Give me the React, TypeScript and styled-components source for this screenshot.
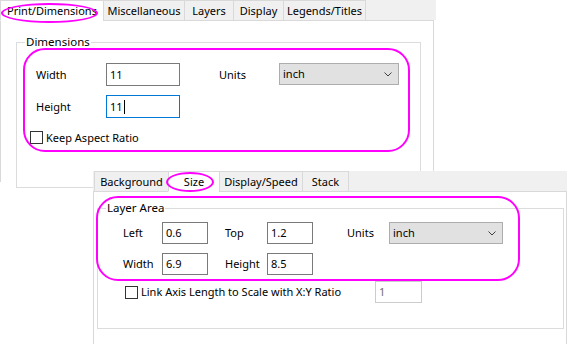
import React from 'react';
import styled, { createGlobalStyle } from 'styled-components';

const Global = createGlobalStyle`
  html, body { margin: 0; padding: 0; background: #ffffff; }
  body {
    font-family: "Noto Sans", "Segoe UI", Arial, sans-serif;
    font-size: 11px;
    color: #000000;
  }
`;

const Canvas = styled.div`
  position: relative;
  width: 567px;
  height: 344px;
  overflow: hidden;
  background: #ffffff;
`;

const Window = styled.div<{ $x: number; $y: number; $w: number; $h: number }>`
  position: absolute;
  left: ${p => p.$x}px;
  top: ${p => p.$y}px;
  width: ${p => p.$w}px;
  height: ${p => p.$h}px;
  display: flex;
  flex-direction: column;
`;

const TabStrip = styled.div<{ $pad: number }>`
  position: relative;
  z-index: 2;
  display: flex;
  flex-shrink: 0;
  height: 20px;
  padding-left: ${p => p.$pad}px;
  background: #f0f0f0;
`;

const Tab = styled.div<{ $w: number; $active?: boolean }>`
  box-sizing: border-box;
  width: ${p => p.$w}px;
  height: 21px;
  margin-left: -1px;
  display: flex;
  align-items: center;
  justify-content: center;
  white-space: nowrap;
  line-height: 16px;
  background: ${p => (p.$active ? '#ffffff' : '#f0f0f0')};
  border: 1px solid #d9d9d9;
  border-bottom-color: ${p => (p.$active ? '#ffffff' : '#d9d9d9')};
  &:first-child { margin-left: 0; }
`;

const Panel = styled.div<{ $w: number; $h?: number }>`
  box-sizing: border-box;
  width: ${p => p.$w}px;
  ${p => (p.$h ? `height: ${p.$h}px;` : 'flex: 1;')}
  background: #ffffff;
  border: 1px solid #d9d9d9;
  border-bottom: none;
  display: flex;
  flex-direction: column;
`;

const GroupBox = styled.div<{ $ml: number; $mt: number; $w: number; $h: number }>`
  position: relative;
  box-sizing: border-box;
  flex-shrink: 0;
  width: ${p => p.$w}px;
  height: ${p => p.$h}px;
  margin: ${p => p.$mt}px 0 0 ${p => p.$ml}px;
  border: 1px solid #dcdcdc;
  background: #ffffff;
  display: flex;
  flex-direction: column;
`;

const Legend = styled.span`
  position: absolute;
  top: -8px;
  left: 8px;
  padding: 0 1px;
  background: #ffffff;
  font-size: 11.5px;
  line-height: 14px;
  white-space: nowrap;
`;

const FieldGrid = styled.div<{ $cols: string; $row: number; $pt: number; $pl: number }>`
  display: grid;
  grid-template-columns: ${p => p.$cols};
  grid-auto-rows: ${p => p.$row}px;
  row-gap: 9px;
  align-items: center;
  padding: ${p => p.$pt}px 0 0 ${p => p.$pl}px;
`;

const FieldLabel = styled.span<{ $indent?: number }>`
  padding-left: ${p => p.$indent ?? 0}px;
  line-height: 16px;
  white-space: nowrap;
`;

const TextBox = styled.div<{ $focused?: boolean; $disabled?: boolean; $w?: number }>`
  box-sizing: border-box;
  width: ${p => (p.$w ? `${p.$w}px` : '100%')};
  height: 100%;
  display: flex;
  align-items: center;
  padding-left: 3px;
  background: #ffffff;
  line-height: 16px;
  border: 1px solid ${p => (p.$focused ? '#0078d7' : p.$disabled ? '#cccccc' : '#7a7a7a')};
  color: ${p => (p.$disabled ? '#6d6d6d' : '#000000')};
`;

const Caret = styled.span`
  display: inline-block;
  width: 0;
  height: 14px;
  margin-left: 1px;
  border-left: 1px solid #000000;
`;

const Select = styled.div`
  box-sizing: border-box;
  height: 22px;
  align-self: start;
  display: flex;
  align-items: center;
  justify-content: space-between;
  padding: 0 6px 0 3px;
  background: #e1e1e1;
  border: 1px solid #adadad;
  line-height: 16px;
`;

const Chevron = () => (
  <svg width="8" height="5" viewBox="0 0 8 5">
    <polyline points="0.5,0.5 4,4 7.5,0.5" fill="none" stroke="#404040" strokeWidth="1" />
  </svg>
);

const CheckRow = styled.div<{ $ml: number; $mt: number; $h: number }>`
  display: flex;
  align-items: center;
  height: ${p => p.$h}px;
  margin: ${p => p.$mt}px 0 0 ${p => p.$ml}px;
`;

const CheckLabel = styled.div<{ $w?: number }>`
  display: flex;
  align-items: center;
  gap: 3px;
  ${p => (p.$w ? `width: ${p.$w}px;` : '')}
  white-space: nowrap;
  line-height: 16px;
`;

const Box = styled.span`
  box-sizing: border-box;
  width: 13px;
  height: 13px;
  border: 1px solid #333333;
  background: #ffffff;
  flex-shrink: 0;
`;

const Mark = styled.div<{ $x: number; $y: number; $w: number; $h: number; $r: string }>`
  position: absolute;
  z-index: 10;
  box-sizing: border-box;
  left: ${p => p.$x}px;
  top: ${p => p.$y}px;
  width: ${p => p.$w}px;
  height: ${p => p.$h}px;
  border: 2px solid #ff00ff;
  border-radius: ${p => p.$r};
  pointer-events: none;
`;

export default function App() {
  return (
    <Canvas>
      <Global />

      <Window $x={0} $y={0} $w={436} $h={190}>
        <TabStrip $pad={0}>
          <Tab $w={104} $active>Print/Dimensions</Tab>
          <Tab $w={82}>Miscellaneous</Tab>
          <Tab $w={50}>Layers</Tab>
          <Tab $w={51}>Display</Tab>
          <Tab $w={83}>Legends/Titles</Tab>
        </TabStrip>
        <Panel $w={434} $h={162}>
          <GroupBox $ml={15} $mt={21} $w={405} $h={146}>
            <Legend>Dimensions</Legend>
            <FieldGrid $cols="70px 74px 99px 120px" $row={23} $pt={20} $pl={19}>
              <FieldLabel>Width</FieldLabel>
              <TextBox>11</TextBox>
              <FieldLabel $indent={39}>Units</FieldLabel>
              <Select>
                <span>inch</span>
                <Chevron />
              </Select>
              <FieldLabel>Height</FieldLabel>
              <TextBox $focused>
                11<Caret />
              </TextBox>
            </FieldGrid>
            <CheckRow $ml={13} $mt={13} $h={13}>
              <CheckLabel>
                <Box />
                Keep Aspect Ratio
              </CheckLabel>
            </CheckRow>
          </GroupBox>
        </Panel>
      </Window>

      <Window $x={93} $y={171} $w={474} $h={173}>
        <TabStrip $pad={1}>
          <Tab $w={75}>Background</Tab>
          <Tab $w={52} $active>Size</Tab>
          <Tab $w={84}>Display/Speed</Tab>
          <Tab $w={47}>Stack</Tab>
        </TabStrip>
        <Panel $w={474}>
          <GroupBox $ml={3} $mt={16} $w={467} $h={121}>
            <Legend>Layer Area</Legend>
            <FieldGrid $cols="39px 46px 59px 46px 76px 114px" $row={22} $pt={13} $pl={25}>
              <FieldLabel>Left</FieldLabel>
              <TextBox>0.6</TextBox>
              <FieldLabel $indent={17}>Top</FieldLabel>
              <TextBox>1.2</TextBox>
              <FieldLabel $indent={34}>Units</FieldLabel>
              <Select>
                <span>inch</span>
                <Chevron />
              </Select>
              <FieldLabel>Width</FieldLabel>
              <TextBox>6.9</TextBox>
              <FieldLabel $indent={17}>Height</FieldLabel>
              <TextBox>8.5</TextBox>
            </FieldGrid>
            <CheckRow $ml={27} $mt={6} $h={22}>
              <CheckLabel $w={250}>
                <Box />
                Link Axis Length to Scale with X:Y Ratio
              </CheckLabel>
              <TextBox $disabled $w={47}>1</TextBox>
            </CheckRow>
          </GroupBox>
        </Panel>
      </Window>

      <Mark $x={1} $y={3} $w={97} $h={20} $r="50%" />
      <Mark $x={23} $y={48} $w={387} $h={104} $r="22px" />
      <Mark $x={166} $y={172} $w={48} $h={20} $r="50%" />
      <Mark $x={96} $y={196} $w={424} $h={85} $r="22px" />
    </Canvas>
  );
}
